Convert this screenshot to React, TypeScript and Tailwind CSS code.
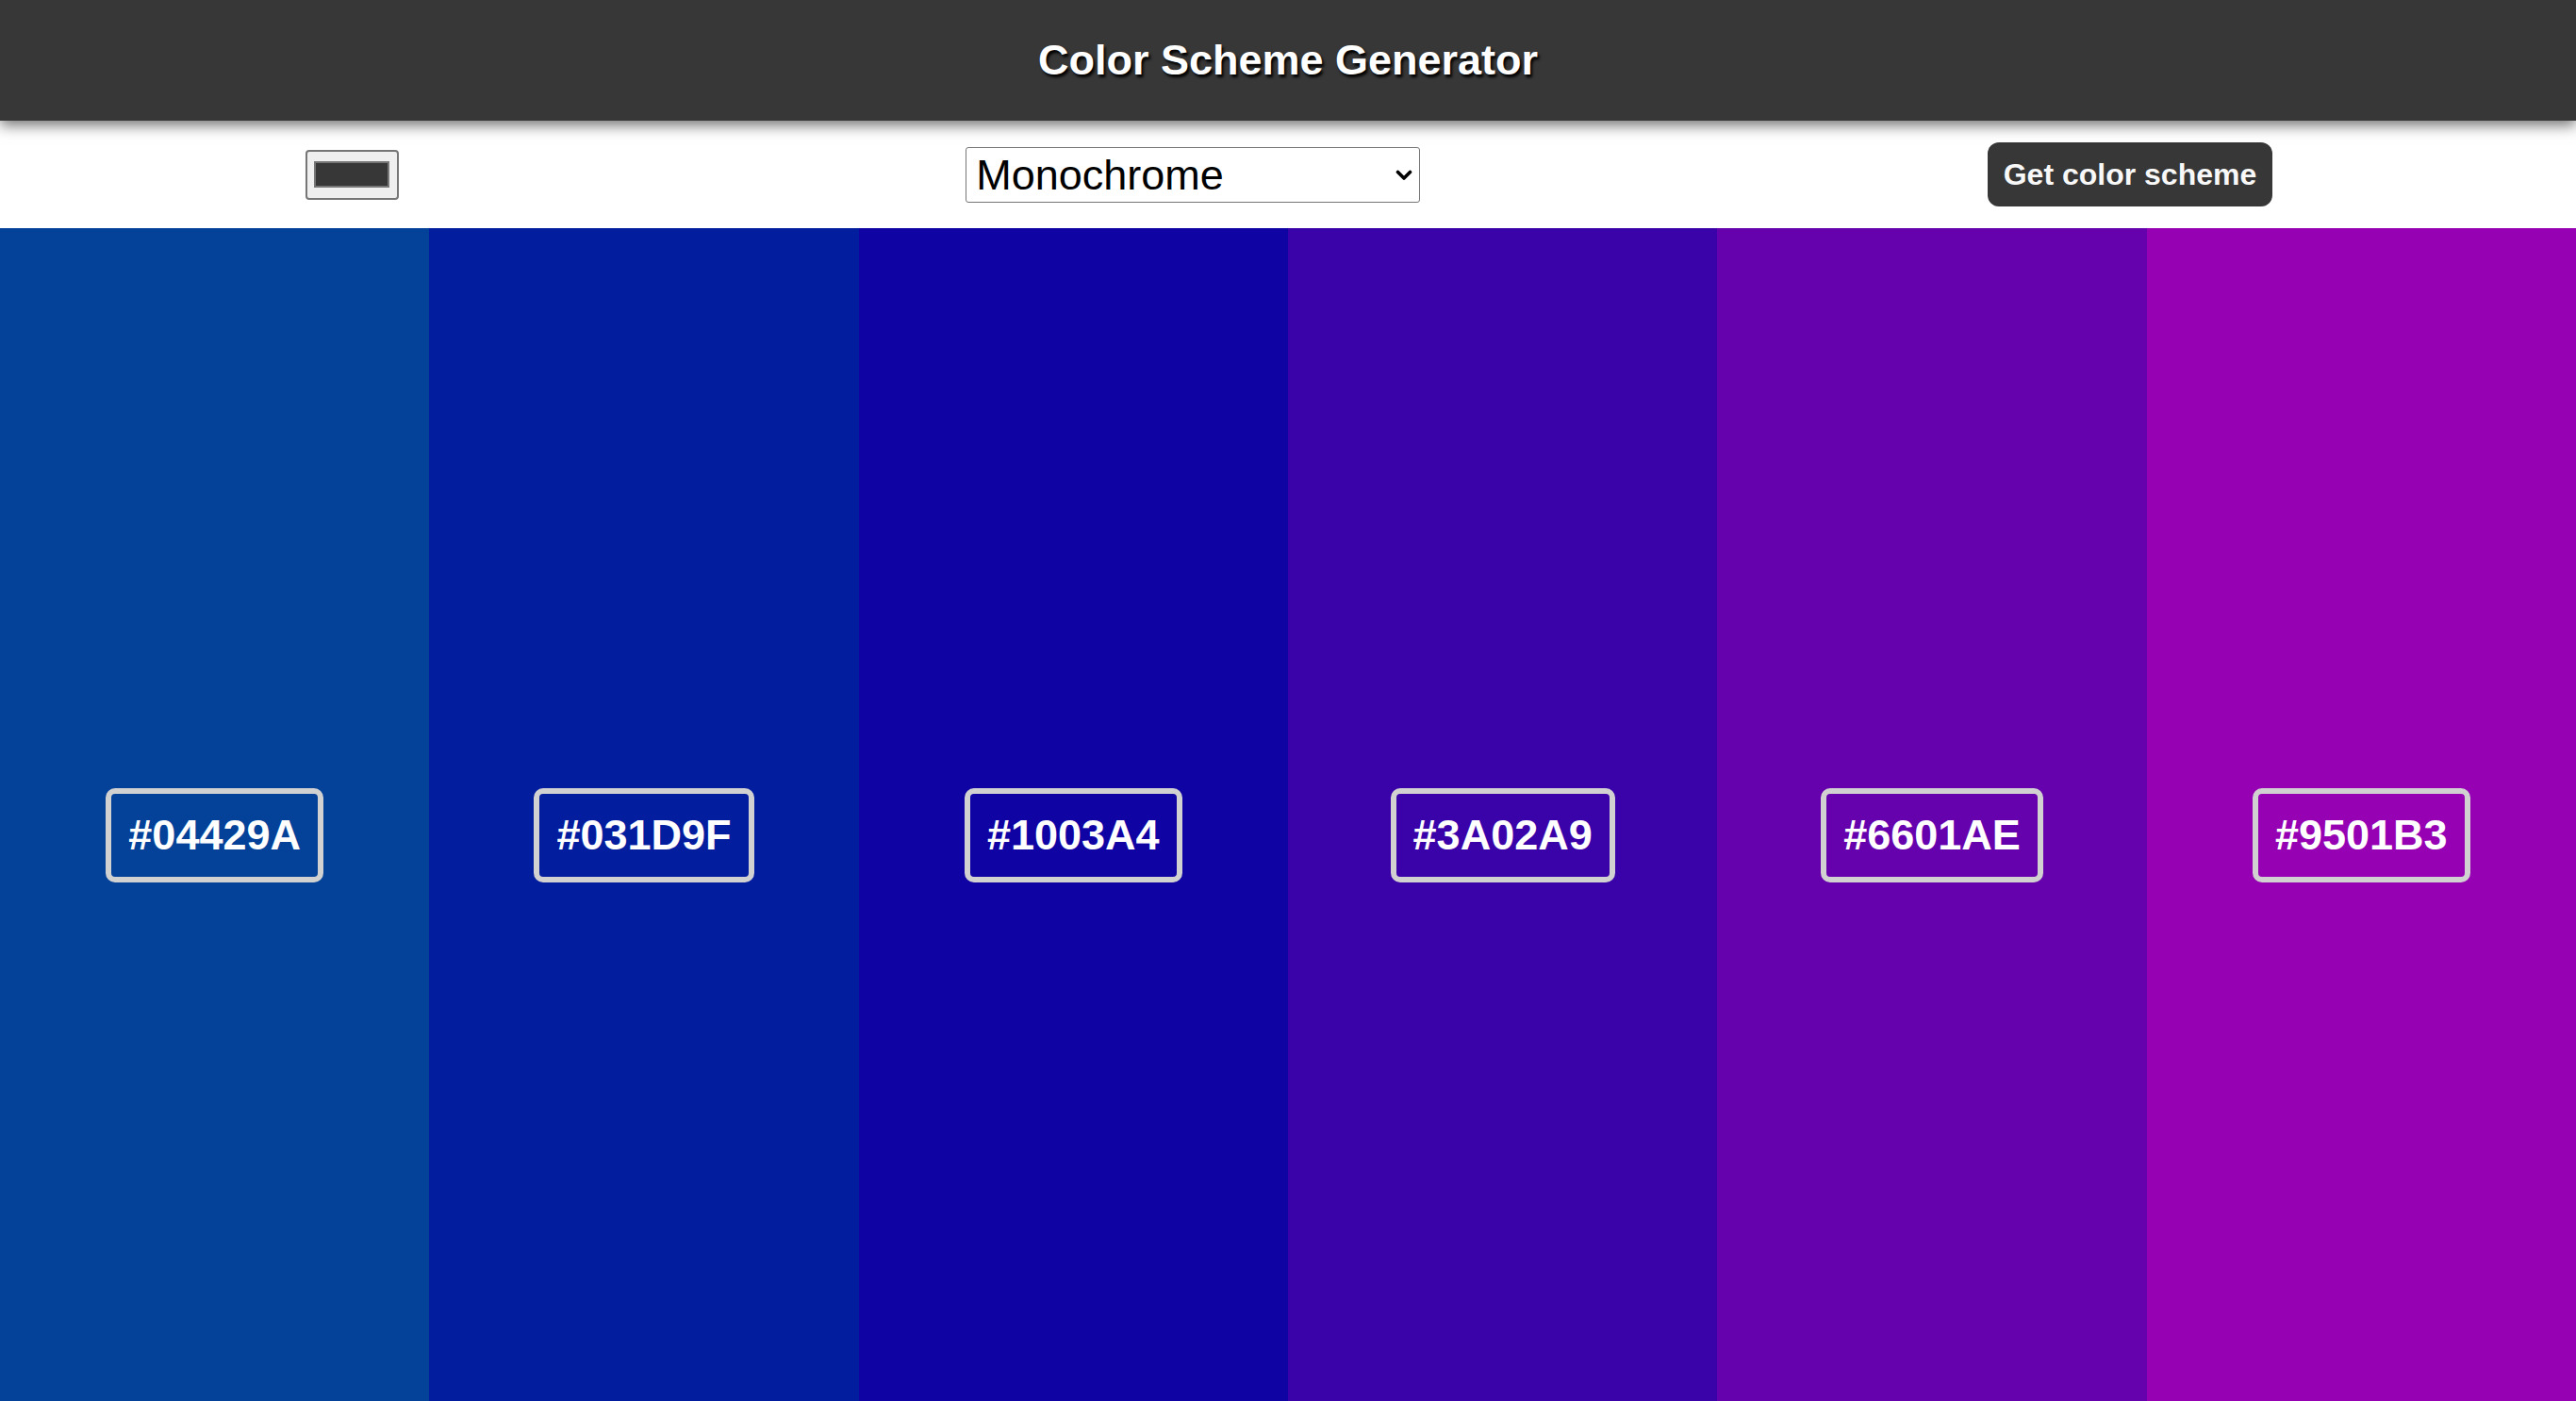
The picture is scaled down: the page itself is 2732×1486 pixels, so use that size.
import { useState } from 'react'

const SCHEMES = ['Monochrome', 'Monochrome-dark', 'Monochrome-light', 'Analogic', 'Complement', 'Analogic-complement', 'Triad', 'Quad']

const COLORS = ['#04429A', '#031D9F', '#1003A4', '#3A02A9', '#6601AE', '#9501B3']

export default function App() {
    const [seed, setSeed] = useState('#373737')
    const [mode, setMode] = useState('Monochrome')

    return (
        <div className="min-h-screen bg-white font-['Liberation_Sans',Arial,sans-serif]">
            {/* Header */}
            <header className="relative z-10 h-[128px] bg-[#373737] flex items-center justify-center shadow-[0_5px_14px_rgba(0,0,0,0.55)]">
                <h1 className="text-[45px] font-bold text-white [text-shadow:2px_3px_3px_#000]">Color Scheme Generator</h1>
            </header>

            {/* Controls */}
            <div className="h-[114px] flex items-center justify-around pl-[23px] pr-[21px]">
                <label className="w-[99px] h-[53px] border-2 border-[#767676] rounded-[4px] bg-[#efefef] flex items-center justify-center cursor-pointer">
                    <input
                        type="color"
                        value={seed}
                        onChange={(e) => setSeed(e.target.value)}
                        className="sr-only"
                    />
                    <span className="block w-[80px] h-[28px] border-2 border-[#767676]" style={{ backgroundColor: seed }} />
                </label>

                <div className="relative w-[482px] h-[59px]">
                    <select
                        value={mode}
                        onChange={(e) => setMode(e.target.value)}
                        className="appearance-none w-full h-full border border-[#767676] rounded-[3px] bg-white text-black text-[45px] leading-none pl-[10px] pr-[40px] outline-none"
                    >
                        {SCHEMES.map((s) => (
                            <option key={s} value={s}>{s}</option>
                        ))}
                    </select>
                    <svg className="pointer-events-none absolute right-[8px] top-[24px] w-[18px] h-[12px]" viewBox="0 0 18 12" fill="none">
                        <path d="M2.5 2.5 L9 9 L15.5 2.5" stroke="#000" strokeWidth="3.6" strokeLinecap="round" strokeLinejoin="round" />
                    </svg>
                </div>

                <button className="h-[68px] px-[17px] rounded-[12px] bg-[#373737] text-[#f8f8f8] text-[32px] font-bold leading-none">
                    Get color scheme
                </button>
            </div>

            {/* Palette */}
            <div className="grid grid-cols-6 h-[1288px]">
                {COLORS.map((c) => (
                    <div key={c} className="flex items-center justify-center" style={{ backgroundColor: c }}>
                        <span className="border-[6px] border-[#d1d1d1] rounded-[10px] px-[18px] py-[18px] text-[45px] leading-[52px] font-bold text-white">
                            {c}
                        </span>
                    </div>
                ))}
            </div>
        </div>
    )
}
